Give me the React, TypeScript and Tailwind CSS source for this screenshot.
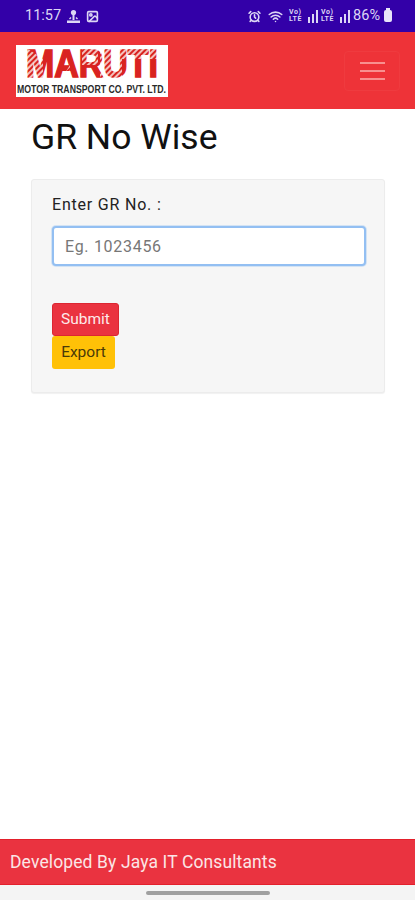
import { Image, Wifi, AlarmClock } from 'lucide-react';

function Signal() {
  return (
    <span className="flex items-end gap-[1px]">
      <span className="flex w-[18px] flex-col text-[7px] leading-[7px] font-bold tracking-[0.5px]">
        <span>Vo)</span>
        <span>LTE</span>
      </span>
      <svg width="10" height="13" viewBox="0 0 10 13" fill="currentColor">
        <rect x="0" y="7" width="2" height="6" />
        <rect x="4" y="4" width="2" height="9" />
        <rect x="8" y="0" width="2" height="13" />
      </svg>
    </span>
  );
}

function StatusBar() {
  return (
    <div className="flex h-[32px] items-center justify-between bg-[#3300a8] pr-[23px] pl-[25px] text-[#dcd6f5]">
      <div className="flex items-center gap-[5px]">
        <span className="text-[14.5px] leading-none">11:57</span>
        <svg width="15" height="15" viewBox="0 0 15 15" fill="currentColor">
          <circle cx="7.5" cy="3.5" r="2.6" />
          <rect x="6.5" y="6" width="2" height="5" />
          <path d="M1 11.5h13v2.5H1z" />
          <path d="M3 9.5l1.5-1.5 1 1L4 10.5zM12 9.5L10.5 8l-1 1 1.500 1.500z" />
        </svg>
        <Image size={13} strokeWidth={3} />
      </div>
      <div className="flex items-center gap-[3px]">
        <AlarmClock size={13} strokeWidth={3} className="mr-[4px]" />
        <Wifi size={15} strokeWidth={2.5} className="mr-[3px]" />
        <Signal />
        <Signal />
        <span className="text-[14.5px] leading-none">86%</span>
        <span className="relative ml-[1px] h-[12px] w-[8px] rounded-[2px] bg-[#e8e4fa]">
          <span className="absolute -top-[2px] left-[2px] h-[2px] w-[4px] bg-[#e8e4fa]" />
        </span>
      </div>
    </div>
  );
}

function Logo() {
  return (
    <svg width="152" height="52" viewBox="0 0 152 52" className="block bg-white">
      <defs>
        <pattern id="stripes" width="4" height="4" patternUnits="userSpaceOnUse" patternTransform="rotate(45)">
          <rect width="4" height="4" fill="#d92320" />
          <rect width="2" height="4" fill="#f3c0bb" />
        </pattern>
        {/* red wordmark, with hatched parts like the original logo */}
        <pattern id="logoFill" x="0" y="0" width="152" height="52" patternUnits="userSpaceOnUse">
          <rect width="152" height="52" fill="#d92320" />
          <polygon points="9,2 27,14 27,36 9,36" fill="url(#stripes)" />
          <polygon points="44,36 54,20 54,36" fill="url(#stripes)" />
          <rect x="66" y="2" width="16" height="18" fill="url(#stripes)" />
          <rect x="84" y="2" width="22" height="34" fill="url(#stripes)" />
          <rect x="106" y="2" width="36" height="12" fill="url(#stripes)" />
        </pattern>
      </defs>
      <text
        x="10"
        y="32"
        textLength="132"
        lengthAdjust="spacingAndGlyphs"
        fill="url(#logoFill)"
        stroke="url(#logoFill)"
        strokeWidth="1.5"
        className="font-['Liberation_Sans',sans-serif] text-[38px] font-bold"
      >
        MARUTI
      </text>
      <text
        x="1"
        y="48"
        textLength="149"
        lengthAdjust="spacingAndGlyphs"
        fill="#2a2a2a"
        className="font-['Liberation_Sans',sans-serif] text-[11px] font-bold"
      >
        MOTOR TRANSPORT CO. PVT. LTD.
      </text>
    </svg>
  );
}

export default function App() {
  return (
    <div className="flex h-[900px] flex-col bg-white font-['Roboto',sans-serif]">
      <StatusBar />
      <nav className="flex h-[77px] items-center justify-between bg-[#ee3338] pr-[15px] pl-[16px]">
        <Logo />
        <button className="flex h-[40px] w-[56px] flex-col items-center justify-center gap-[6px] rounded border border-[#ef3b3f]">
          <span className="h-[2px] w-[25px] bg-[#f8908f]" />
          <span className="h-[2px] w-[25px] bg-[#f8908f]" />
          <span className="h-[2px] w-[25px] bg-[#f8908f]" />
        </button>
      </nav>

      <main className="flex-1 pr-[30px] pl-[31px]">
        <h1 className="mt-[7px] h-[63px] text-[35.5px] leading-[42px] text-[#111]">GR No Wise</h1>
        <div className="h-[214px] rounded-[3px] border border-[#ececec] bg-[#f6f6f6] px-[20px] pt-[15px] shadow-[0_1px_1px_rgba(0,0,0,0.06)]">
          <label className="block text-[16px] leading-[20px] tracking-[0.8px] text-[#222]">Enter GR No. :</label>
          <input
            placeholder="Eg. 1023456"
            className="mt-[11px] h-[40px] w-[314px] rounded-[4px] border-2 border-[#93bff2] bg-white px-[11px] text-[16px] tracking-[0.7px] shadow-[0_0_0_1px_rgba(147,191,242,0.35)] outline-none placeholder:text-[#777]"
          />
          <div className="mt-[37px] flex flex-col items-start">
            <button className="h-[33px] w-[67px] rounded-[3px] border border-[#dc2632] bg-[#ea3340] text-[15.5px] text-[#fdeaea]">Submit</button>
            <button className="h-[33px] w-[63px] rounded-[3px] bg-[#ffc107] text-[15.5px] text-[#4a3a08]">Export</button>
          </div>
        </div>
      </main>

      <footer className="flex h-[46px] items-center border-y border-[#e3202c] bg-[#ea3340] pl-[10px] text-[17.5px] tracking-[0.12px] text-[#fbe6e6]">
        Developed By Jaya IT Consultants
      </footer>
      <div className="flex h-[15px] items-center justify-center bg-[#f4f4f4]">
        <span className="h-[4px] w-[124px] rounded-full bg-[#a0a0a0]" />
      </div>
    </div>
  );
}
